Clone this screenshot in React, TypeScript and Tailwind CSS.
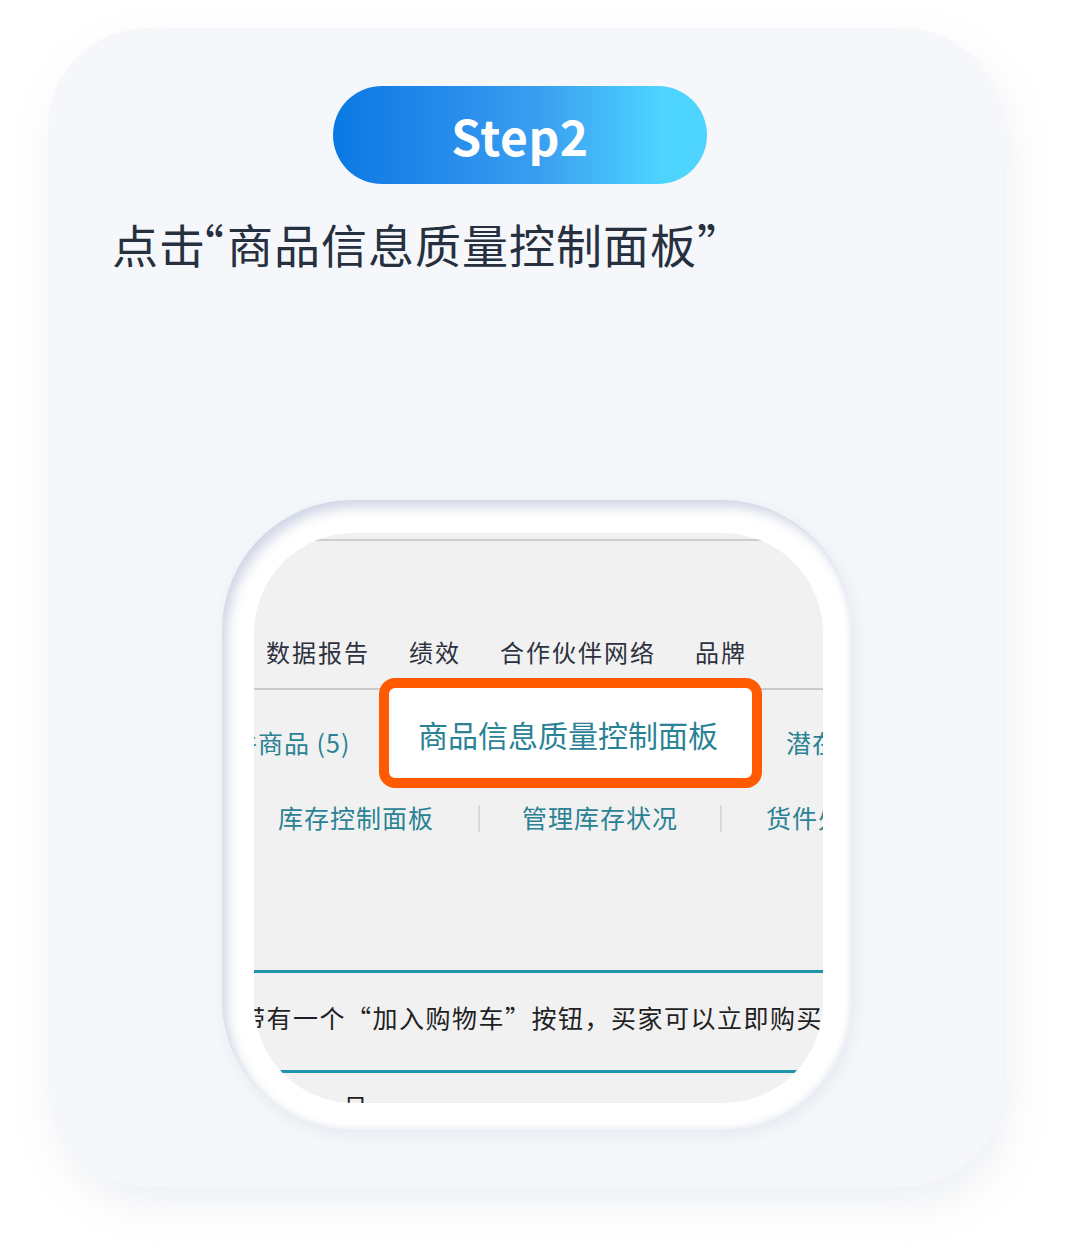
import React from "react";

const cjk = { fontFamily: '"Noto Sans CJK SC", "Noto Sans", sans-serif' };

export default function App() {
  return (
    <div className="w-[1080px] h-[1244px] bg-white overflow-hidden" style={cjk}>
      <div className="ml-[48px] pt-[28px]">
        <div className="w-[955px] h-[1159px] rounded-[100px] bg-[#f5f7fa] shadow-[6px_18px_40px_rgba(160,170,190,0.18)] pt-[58px] flex flex-col">
          {/* Step pill */}
          <div className="ml-[285px] w-[374px] h-[98px] rounded-full bg-[linear-gradient(90deg,#0b78e3_0%,#2a8fec_35%,#3a9ef0_55%,#4dd4ff_88%,#4dd4ff_100%)] flex items-center justify-center">
            <span className="text-white font-bold text-[48px] leading-none tracking-[0.5px]">Step2</span>
          </div>
          {/* Title */}
          <div className="ml-[64px] mt-[29px] text-[46px] leading-[60px] tracking-[1px] text-[#27303f] whitespace-nowrap">
            点击<span className="inline-block ml-[-28px] mr-[2px]">“</span>商品信息质量控制面板”
          </div>
          {/* Ring frame */}
          <div className="ml-[174px] mt-[227px] w-[630px] h-[630px] rounded-[130px] bg-white shadow-[inset_5px_7px_12px_rgba(205,212,228,0.95),inset_-2px_-2px_6px_rgba(235,238,244,0.8),3px_5px_14px_rgba(215,221,233,0.5)] pt-[33px] pl-[32px]">
            <div className="w-[569px] h-[570px] rounded-[100px] overflow-hidden bg-[#f1f1f1] flex flex-col">
              <div className="mt-[6px] h-[2px] bg-[#cdcdcd] shrink-0" />
              {/* Row 1 */}
              <div className="mt-[95px] h-[32px] flex items-center pl-[12px] gap-[39px] text-[24px] tracking-[2px] text-[#2e3140] whitespace-nowrap">
                <span>数据报告</span>
                <span>绩效</span>
                <span>合作伙伴网络</span>
                <span>品牌</span>
              </div>
              <div className="mt-[20px] h-[2px] bg-[#c9c9c9] shrink-0" />
              {/* Row 2 */}
              <div className="mt-[-12px] h-[110px] flex items-start whitespace-nowrap">
                <span className="ml-[-22px] w-[116px] shrink-0 mt-[48px] text-[25px] leading-[32px] tracking-[1px] text-[#2a8294]">件商品 (5)</span>
                <div className="ml-[31px] w-[383px] h-[110px] shrink-0 rounded-[16px] border-[10px] border-[#ff5a00] bg-white flex items-center pl-[29px]">
                  <span className="text-[30px] leading-[36px] text-[#2a8294] mt-[1px]">商品信息质量控制面板</span>
                </div>
                <span className="ml-[24px] mt-[48px] text-[25px] leading-[32px] tracking-[1px] text-[#2a8294]">潜在商品</span>
              </div>
              {/* Row 3 */}
              <div className="mt-[14px] h-[32px] flex items-center pl-[24px] whitespace-nowrap text-[25px] tracking-[1px] text-[#2a8294]">
                <span>库存控制面板</span>
                <span className="ml-[44px] w-[2px] h-[27px] bg-[#d8d8d8] shrink-0" />
                <span className="ml-[42px]">管理库存状况</span>
                <span className="ml-[42px] w-[2px] h-[27px] bg-[#d8d8d8] shrink-0" />
                <span className="ml-[44px]">货件处理进度</span>
              </div>
              <div className="mt-[136px] h-[3px] bg-[#2094a8] shrink-0" />
              {/* Text row */}
              <div className="mt-[29px] h-[32px] flex items-center whitespace-nowrap text-[25px] tracking-[1.5px] text-[#1f1f24]">
                <span className="ml-[-14px]">带有一个“加入购物车”按钮，买家可以立即购买该商品</span>
              </div>
              <div className="mt-[36px] h-[3px] bg-[#2094a8] shrink-0" />
              <div className="mt-[17px] pl-[66px] text-[25px] leading-[32px] text-[#1f1f24] whitespace-nowrap">
                <span>-- 吕</span>
              </div>
            </div>
          </div>
        </div>
      </div>
    </div>
  );
}
